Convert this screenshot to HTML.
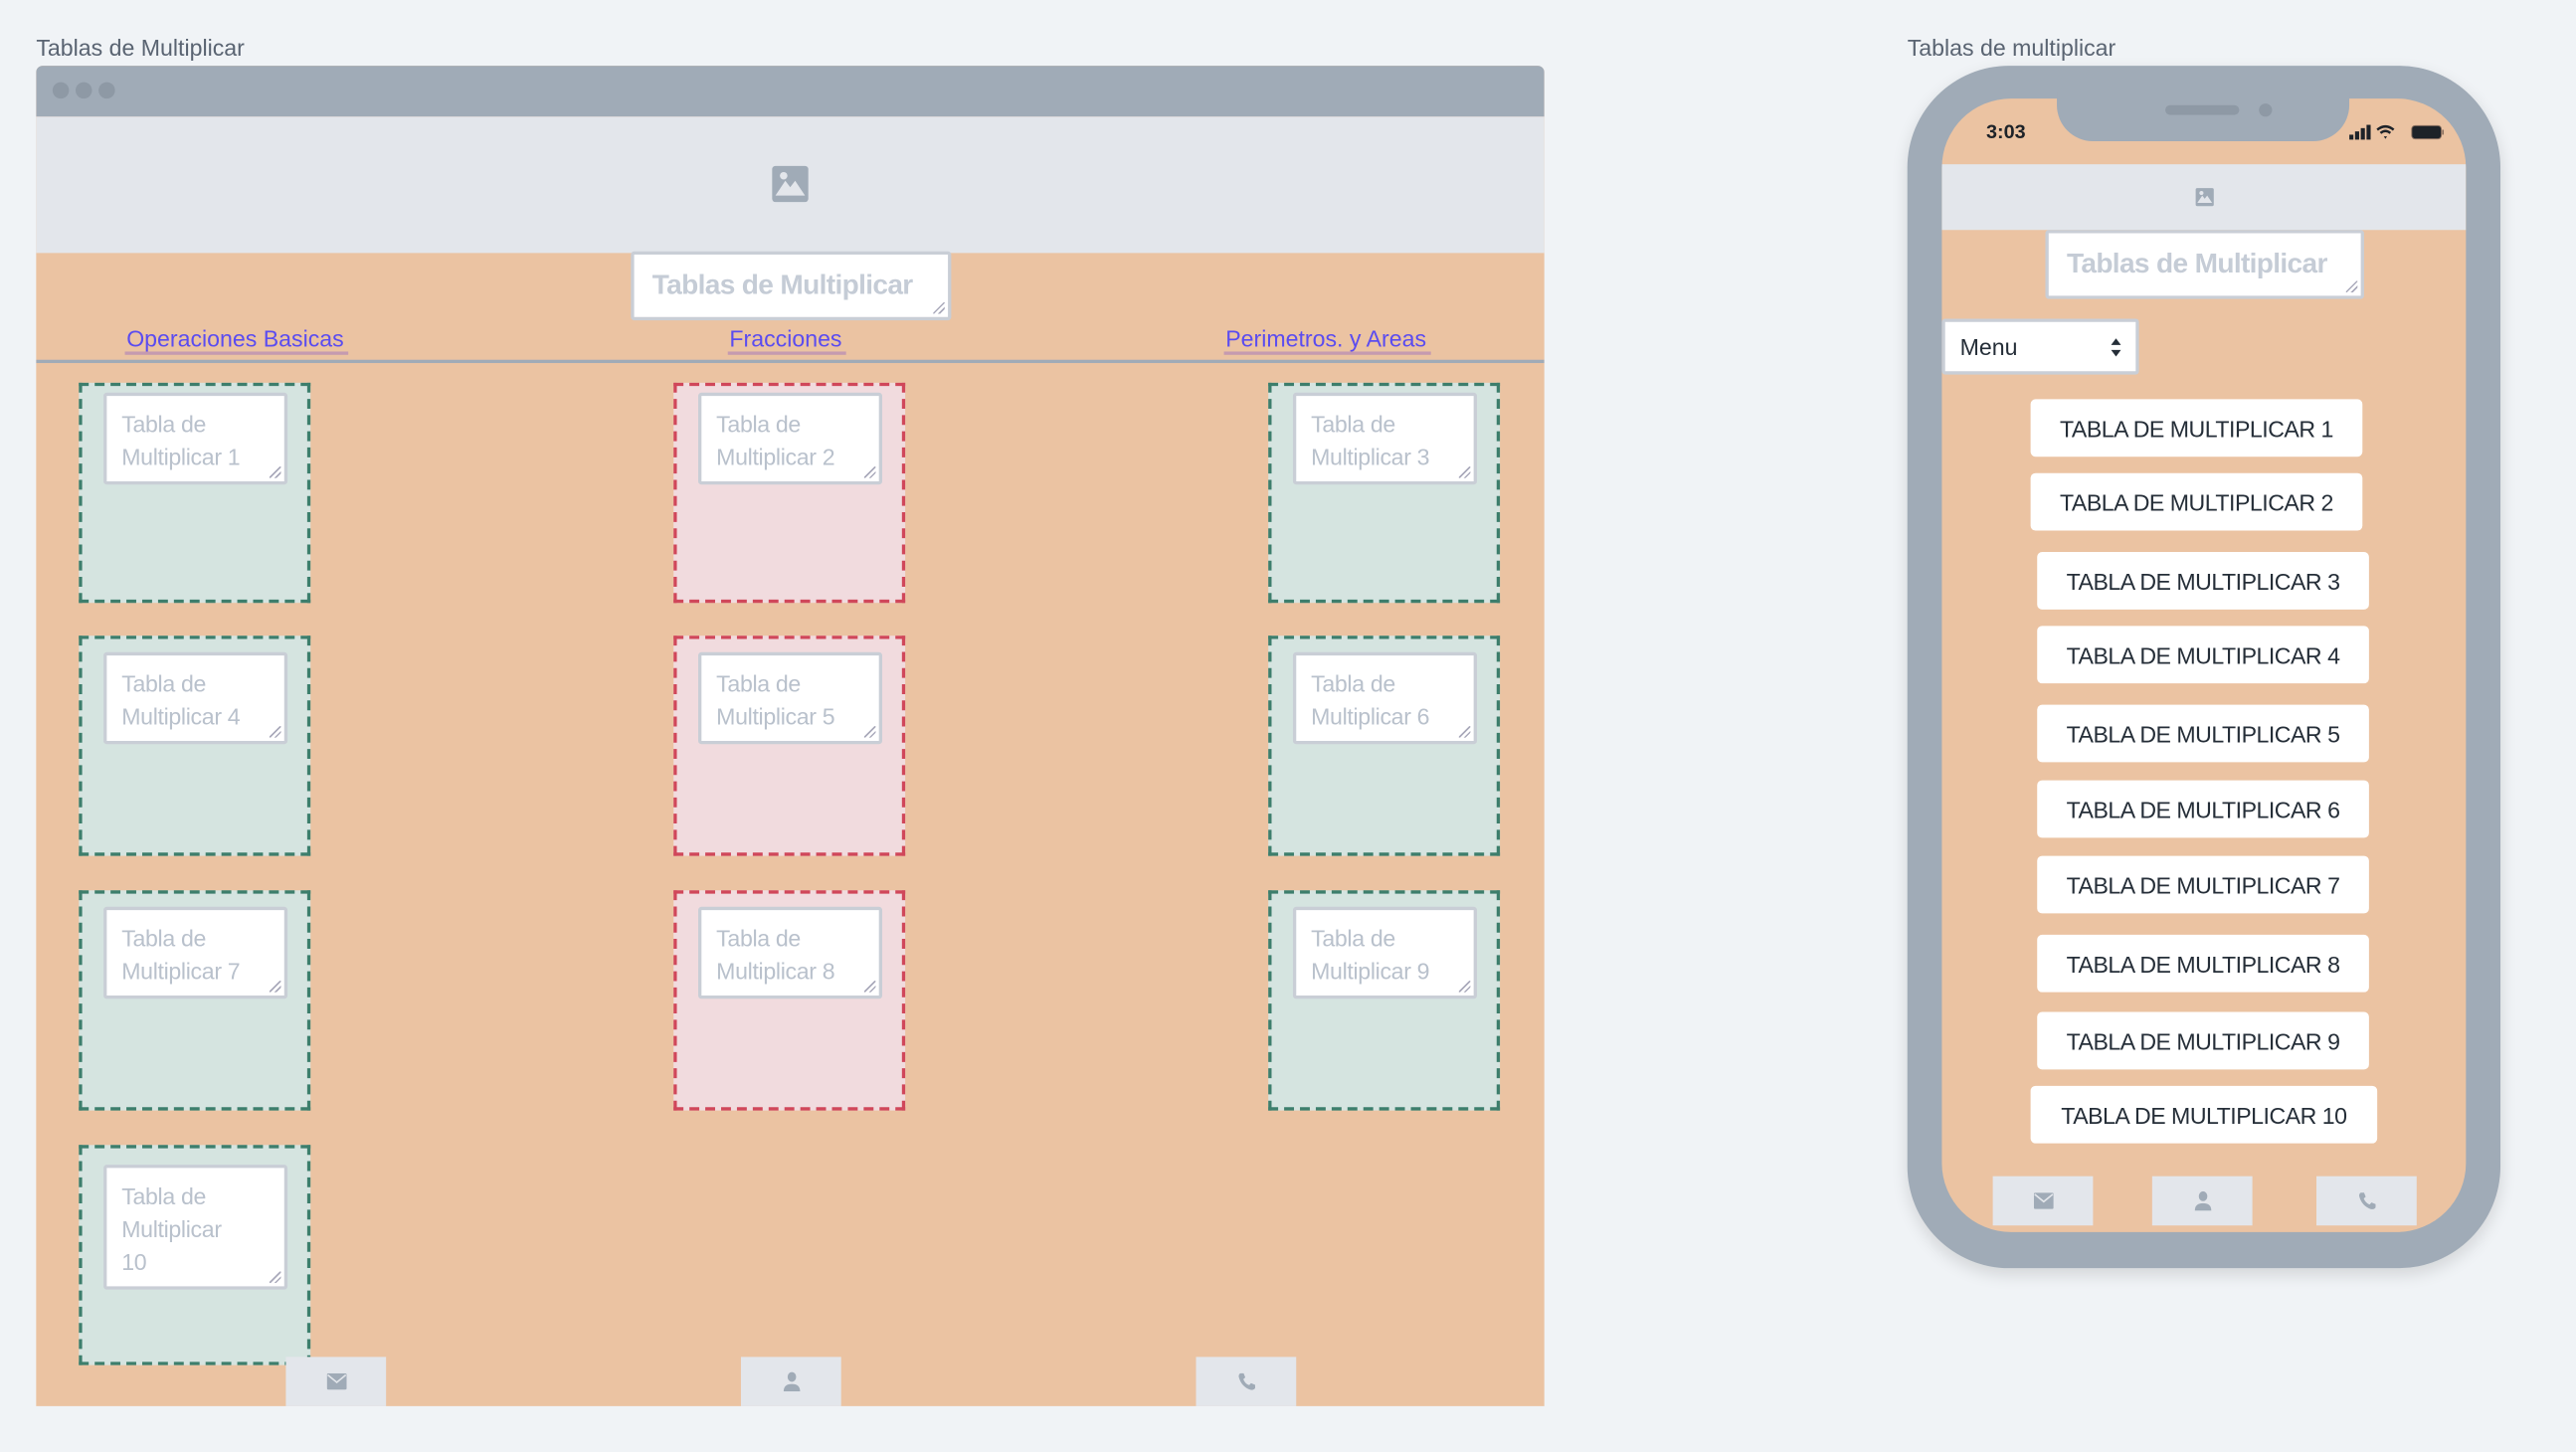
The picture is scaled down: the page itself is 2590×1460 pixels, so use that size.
<!DOCTYPE html>
<html><head><meta charset="utf-8"><style>
*{box-sizing:border-box;margin:0;padding:0}
html,body{width:2590px;height:1460px;overflow:hidden;background:#f0f3f6;font-family:"Liberation Sans",sans-serif}
#w{position:absolute;left:0;top:0;width:1568px;height:884px;transform:scale(1.65179);transform-origin:0 0}
.a{position:absolute}
.lbl{font-size:14px;color:#5a6472}
.ta{position:absolute;background:#fff;border:2px solid #c9ced6;border-radius:2px;color:#b9c1cc;font-size:14px;line-height:20px;padding:7px 9px;letter-spacing:-0.2px}
.ta:after{content:"";position:absolute;right:2px;bottom:2px;width:7px;height:7px;background:linear-gradient(135deg,transparent 45%,#aab 45%,#aab 55%,transparent 55%,transparent 70%,#aab 70%,#aab 80%,transparent 80%)}
.g{position:absolute;width:141px;height:134px;background:#d5e4e0;border:2px dashed #3d7e6c}
.r{position:absolute;width:141px;height:134px;background:#f1dbde;border:2px dashed #d0475a}
.lk{position:absolute;top:198px;font-size:14px;color:#5b4cf0;border-bottom:2px solid #c59ab0;line-height:16px;padding:0 3px 0 1px}
.fb{position:absolute;width:61px;height:30px;background:#e3e6eb;display:flex;align-items:center;justify-content:center}
.btn{position:absolute;height:35px;background:#fff;border-radius:3px;font-size:14px;color:#252e38;display:flex;align-items:center;justify-content:center;letter-spacing:-0.3px}
</style></head><body><div id="w">
<div class="a lbl" style="left:22px;top:21px">Tablas de Multiplicar</div>
<div class="a lbl" style="left:1161px;top:21px">Tablas de multiplicar</div>

<div class="a" style="left:22px;top:40px;width:918px;height:816px;background:#ebc3a2;border-radius:4px 4px 0 0;overflow:hidden">
 <div class="a" style="left:0;top:0;width:918px;height:31px;background:#a0abb7"></div>
 <div class="a" style="left:10px;top:10px;width:10px;height:10px;border-radius:50%;background:#8e99a5"></div>
 <div class="a" style="left:24px;top:10px;width:10px;height:10px;border-radius:50%;background:#8e99a5"></div>
 <div class="a" style="left:38px;top:10px;width:10px;height:10px;border-radius:50%;background:#8e99a5"></div>
 <div class="a" style="left:0;top:31px;width:918px;height:83px;background:#e3e6eb"></div>
 <svg class="a" style="left:447px;top:60px" width="24" height="24" viewBox="0 0 24 24"><rect x="1" y="1" width="22" height="22" rx="2" fill="#a0abb7"/><circle cx="8" cy="7" r="2.3" fill="#e3e6eb"/><path d="M3 19 L9 10 L12 14 L15 10 L21 19Z" fill="#e3e6eb"/></svg>
 <div class="a" style="left:0;top:179px;width:918px;height:2px;background:#a0abb7"></div>
</div>
<div class="ta" style="left:384px;top:153px;width:195px;height:42px;font-weight:bold;font-size:17px;color:#c5ccd6;padding:9px 11px;letter-spacing:-0.4px">Tablas de Multiplicar</div>
<div class="lk" style="left:76px">Operaciones Basicas</div>
<div class="lk" style="left:443px">Fracciones</div>
<div class="lk" style="left:745px">Perimetros. y Areas</div>

<div class="g" style="left:48px;top:233px"></div><div class="ta" style="left:63px;top:239px;width:112px;height:56px">Tabla de Multiplicar 1</div>
<div class="r" style="left:410px;top:233px"></div><div class="ta" style="left:425px;top:239px;width:112px;height:56px">Tabla de Multiplicar 2</div>
<div class="g" style="left:772px;top:233px"></div><div class="ta" style="left:787px;top:239px;width:112px;height:56px">Tabla de Multiplicar 3</div>
<div class="g" style="left:48px;top:387px"></div><div class="ta" style="left:63px;top:397px;width:112px;height:56px">Tabla de Multiplicar 4</div>
<div class="r" style="left:410px;top:387px"></div><div class="ta" style="left:425px;top:397px;width:112px;height:56px">Tabla de Multiplicar 5</div>
<div class="g" style="left:772px;top:387px"></div><div class="ta" style="left:787px;top:397px;width:112px;height:56px">Tabla de Multiplicar 6</div>
<div class="g" style="left:48px;top:542px"></div><div class="ta" style="left:63px;top:552px;width:112px;height:56px">Tabla de Multiplicar 7</div>
<div class="r" style="left:410px;top:542px"></div><div class="ta" style="left:425px;top:552px;width:112px;height:56px">Tabla de Multiplicar 8</div>
<div class="g" style="left:772px;top:542px"></div><div class="ta" style="left:787px;top:552px;width:112px;height:56px">Tabla de Multiplicar 9</div>
<div class="g" style="left:48px;top:697px"></div><div class="ta" style="left:63px;top:709px;width:112px;height:76px">Tabla de<br>Multiplicar<br>10</div>

<div class="fb" style="left:174px;top:826px"><svg width="12" height="10" viewBox="0 0 12 10"><rect width="12" height="10" rx="1" fill="#a0abb7"/><path d="M0.5 1 L6 5.5 L11.5 1" stroke="#e3e6eb" fill="none"/></svg></div>
<div class="fb" style="left:451px;top:826px"><svg width="12" height="12" viewBox="0 0 12 12"><ellipse cx="6" cy="3.2" rx="2.6" ry="3" fill="#a0abb7"/><path d="M1 12 Q1 7.5 6 7.5 Q11 7.5 11 12Z" fill="#a0abb7"/></svg></div>
<div class="fb" style="left:728px;top:826px"><svg width="12" height="12" viewBox="0 0 12 12"><path d="M2 1 L4 1 L5 3.5 L3.8 4.6 Q5 7.5 7.4 8.2 L8.5 7 L11 8 L11 10 Q10 11.5 8 11 Q2.5 9 1 3 Q1 1.5 2 1Z" fill="#a0abb7"/></svg></div>

<!-- phone -->
<div class="a" style="left:1161px;top:40px;width:361px;height:732px;border-radius:62px;background:#a0abb7;box-shadow:0 4px 10px rgba(0,0,0,.12)"></div>
<div class="a" style="left:1182px;top:60px;width:319px;height:690px;border-radius:42px;background:#ebc3a2;overflow:hidden">
 <div class="a" style="left:0;top:40px;width:319px;height:40px;background:#e3e6eb"></div>
</div>
<div class="a" style="left:1252px;top:56px;width:178px;height:30px;background:#a0abb7;border-radius:0 0 22px 22px"></div>
<div class="a" style="left:1318px;top:64px;width:45px;height:6px;border-radius:3px;background:#8e99a5"></div>
<div class="a" style="left:1375px;top:63px;width:8px;height:8px;border-radius:50%;background:#8e99a5"></div>
<div class="a" style="left:1209px;top:73px;font-size:12px;font-weight:bold;color:#1d2228">3:03</div>
<svg class="a" style="left:1430px;top:75px" width="58" height="11" viewBox="0 0 58 11"><rect x="0" y="7" width="2.5" height="3" fill="#1d2228"/><rect x="3.5" y="5" width="2.5" height="5" fill="#1d2228"/><rect x="7" y="3" width="2.5" height="7" fill="#1d2228"/><rect x="10.5" y="1" width="2.5" height="9" fill="#1d2228"/><path d="M17 4 Q22 0 27 4" stroke="#1d2228" stroke-width="1.5" fill="none"/><path d="M19 6 Q22 3.5 25 6" stroke="#1d2228" stroke-width="1.5" fill="none"/><path d="M21 8 L22 9.5 L23 8Z" fill="#1d2228"/><rect x="38" y="1.5" width="18" height="8" rx="2" fill="#1d2228" stroke="#8a7060" stroke-width=".6"/><rect x="56.5" y="4" width="1" height="3" fill="#8a7060"/></svg>
<svg class="a" style="left:1336px;top:114px" width="12" height="12" viewBox="0 0 24 24"><rect x="1" y="1" width="22" height="22" rx="2" fill="#a0abb7"/><circle cx="8" cy="7" r="2.5" fill="#e3e6eb"/><path d="M3 19 L9 10 L12 14 L15 10 L21 19Z" fill="#e3e6eb"/></svg>
<div class="ta" style="left:1245px;top:140px;width:194px;height:42px;font-weight:bold;font-size:17px;color:#c5ccd6;padding:9px 11px;letter-spacing:-0.4px">Tablas de Multiplicar</div>
<div class="a" style="left:1182px;top:194px;width:120px;height:34px;background:#fff;border:2px solid #c9ced6;border-radius:2px;font-size:14px;color:#252e38;padding:7px 9px">Menu<svg style="position:absolute;right:9px;top:10px" width="6" height="11" viewBox="0 0 6 11"><path d="M0 4 L3 0 L6 4Z M0 7 L3 11 L6 7Z" fill="#252e38"/></svg></div>

<div class="btn" style="left:1236px;top:243px;width:202px">TABLA DE MULTIPLICAR 1</div>
<div class="btn" style="left:1236px;top:288px;width:202px">TABLA DE MULTIPLICAR 2</div>
<div class="btn" style="left:1240px;top:336px;width:202px">TABLA DE MULTIPLICAR 3</div>
<div class="btn" style="left:1240px;top:381px;width:202px">TABLA DE MULTIPLICAR 4</div>
<div class="btn" style="left:1240px;top:429px;width:202px">TABLA DE MULTIPLICAR 5</div>
<div class="btn" style="left:1240px;top:475px;width:202px">TABLA DE MULTIPLICAR 6</div>
<div class="btn" style="left:1240px;top:521px;width:202px">TABLA DE MULTIPLICAR 7</div>
<div class="btn" style="left:1240px;top:569px;width:202px">TABLA DE MULTIPLICAR 8</div>
<div class="btn" style="left:1240px;top:616px;width:202px">TABLA DE MULTIPLICAR 9</div>
<div class="btn" style="left:1236px;top:661px;width:211px">TABLA DE MULTIPLICAR 10</div>

<div class="fb" style="left:1213px;top:716px"><svg width="12" height="10" viewBox="0 0 12 10"><rect width="12" height="10" rx="1" fill="#a0abb7"/><path d="M0.5 1 L6 5.5 L11.5 1" stroke="#e3e6eb" fill="none"/></svg></div>
<div class="fb" style="left:1310px;top:716px"><svg width="12" height="12" viewBox="0 0 12 12"><ellipse cx="6" cy="3.2" rx="2.6" ry="3" fill="#a0abb7"/><path d="M1 12 Q1 7.5 6 7.5 Q11 7.5 11 12Z" fill="#a0abb7"/></svg></div>
<div class="fb" style="left:1410px;top:716px"><svg width="12" height="12" viewBox="0 0 12 12"><path d="M2 1 L4 1 L5 3.5 L3.8 4.6 Q5 7.5 7.4 8.2 L8.5 7 L11 8 L11 10 Q10 11.5 8 11 Q2.5 9 1 3 Q1 1.5 2 1Z" fill="#a0abb7"/></svg></div>
</div></body></html>
